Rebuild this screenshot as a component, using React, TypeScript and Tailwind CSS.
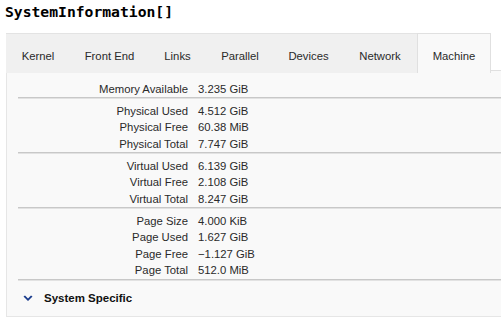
import React from "react";

const groups: [string, string][][] = [
  [["Memory Available", "3.235 GiB"]],
  [
    ["Physical Used", "4.512 GiB"],
    ["Physical Free", "60.38 MiB"],
    ["Physical Total", "7.747 GiB"],
  ],
  [
    ["Virtual Used", "6.139 GiB"],
    ["Virtual Free", "2.108 GiB"],
    ["Virtual Total", "8.247 GiB"],
  ],
  [
    ["Page Size", "4.000 KiB"],
    ["Page Used", "1.627 GiB"],
    ["Page Free", "\u22121.127 GiB"],
    ["Page Total", "512.0 MiB"],
  ],
];

const tabs: [string, string][] = [
  ["Kernel", "w-[64px]"],
  ["Front End", "w-[79px]"],
  ["Links", "w-[57px]"],
  ["Parallel", "w-[68px]"],
  ["Devices", "w-[69px]"],
  ["Network", "w-[74px]"],
];

export default function App() {
  return (
    <div
      className="w-[501px] h-[321px] bg-white overflow-hidden text-[#2a2a2a]"
      style={{ fontFamily: '"Liberation Sans", Arial, sans-serif' }}
    >
      <div
        className="pl-[5px] pt-[2px] h-[33px] text-[14.7px] font-bold text-black leading-[20px]"
        style={{ fontFamily: '"DejaVu Sans Mono", monospace' }}
      >
        SystemInformation[]
      </div>
      <div className="ml-[6px]">
        <div className="flex h-[40px] bg-[#f0f0f0] border-t border-[#e3e3e3] text-[11.3px]">
          {tabs.map(([t, w]) => (
            <div
              key={t}
              className={`${w} flex items-center justify-center whitespace-nowrap h-[39px] pt-[6px]`}
            >
              {t}
            </div>
          ))}
          <div className="w-[74px] -mt-px h-[40px] flex items-center justify-center whitespace-nowrap bg-[#f9f9f9] border border-b-0 border-[#e0e0e0] pt-[6px]">
            Machine
          </div>
          <div className="flex-1 flex flex-col -mt-px">
            <div className="h-[38px] bg-white border-b border-[#e0e0e0]" />
            <div className="flex-1 bg-[#f9f9f9]" />
          </div>
        </div>
        <div className="bg-[#f9f9f9] border-l border-b border-[#e6e6e6] h-[244px] text-[11.3px]">
          {groups.map((g, gi) => (
            <div key={gi} className={gi === 0 ? "pt-[7.5px]" : "pt-[3.5px]"}>
              {g.map(([k, v]) => (
                <div key={k} className="flex h-[16.5px] items-center leading-[16.5px] whitespace-nowrap">
                  <div className="w-[181px] text-right">{k}</div>
                  <div className="pl-[10px]">{v}</div>
                </div>
              ))}
              <div className="ml-[11px] h-[2px] border-t border-[#c8c8c8] bg-[#e2e2e2]" />
            </div>
          ))}
          <div className="flex items-center h-[36px] pl-[16px]">
            <svg width="10" height="8" viewBox="0 0 10 8" className="mr-[11px]">
              <path d="M0.5 1.5 L5 6 L9.5 1.5 L8 0.5 L5 3.5 L2 0.5 Z" fill="#1a3c8c" />
            </svg>
            <span className="font-bold text-[11.5px] text-[#111]">System Specific</span>
          </div>
        </div>
      </div>
    </div>
  );
}
